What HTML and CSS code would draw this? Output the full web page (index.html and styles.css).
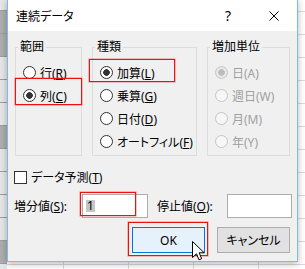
FILE: index.html
```html
<!DOCTYPE html>
<html lang="ja">
<head>
<meta charset="utf-8">
<title>連続データ</title>
<link rel="stylesheet" href="styles.css">
</head>
<body>
<div class="screen">
  <div class="sheet">
    <div class="rowheads">
      <div class="rowhead"></div>
      <div class="rowhead sel"></div>
      <div class="rowhead sel"></div>
      <div class="rowhead"></div>
      <div class="rowhead"></div>
      <div class="rowhead"></div>
      <div class="rowhead sel"></div>
      <div class="rowhead"></div>
      <div class="rowhead"></div>
      <div class="rowhead"></div>
      <div class="rowhead"></div>
      <div class="rowhead sel"></div>
      <div class="rowhead"></div>
    </div>
    <div class="cells"></div>
  </div>

  <div class="dialog">
    <div class="titlebar">
      <span class="title">連続データ</span>
      <span class="tbtn help">?</span>
      <span class="tbtn close">
        <svg width="10" height="10" viewBox="0 0 10 10"><path d="M0.5 0.5L9.5 9.5M9.5 0.5L0.5 9.5" stroke="#000" stroke-width="1" fill="none"/></svg>
      </span>
    </div>
    <div class="body">
      <div class="groups">
        <fieldset class="group g1">
          <legend>範囲</legend>
          <div class="opts">
            <label class="opt"><input class="radio" type="radio" name="range"><span>行(<u>R</u>)</span></label>
            <label class="opt"><input class="radio" type="radio" name="range" checked><span>列(<u>C</u>)</span></label>
          </div>
        </fieldset>
        <fieldset class="group g2">
          <legend>種類</legend>
          <div class="opts">
            <label class="opt"><input class="radio" type="radio" name="kind" checked><span>加算(<u>L</u>)</span></label>
            <label class="opt"><input class="radio" type="radio" name="kind"><span>乗算(<u>G</u>)</span></label>
            <label class="opt"><input class="radio" type="radio" name="kind"><span>日付(<u>D</u>)</span></label>
            <label class="opt"><input class="radio" type="radio" name="kind"><span>オートフィル(<u>F</u>)</span></label>
          </div>
        </fieldset>
        <fieldset class="group g3" disabled>
          <legend>増加単位</legend>
          <div class="opts">
            <label class="opt"><input class="radio" type="radio" name="unit" checked disabled><span>日(A)</span></label>
            <label class="opt"><input class="radio" type="radio" name="unit" disabled><span>週日(W)</span></label>
            <label class="opt"><input class="radio" type="radio" name="unit" disabled><span>月(M)</span></label>
            <label class="opt"><input class="radio" type="radio" name="unit" disabled><span>年(Y)</span></label>
          </div>
        </fieldset>
      </div>

      <label class="check"><input class="box" type="checkbox"><span>データ予測(<u>T</u>)</span></label>

      <div class="values">
        <span class="vlabel">増分値(<u>S</u>):</span>
        <div class="field"><span class="sel">1</span></div>
        <span class="vlabel second">停止値(<u>O</u>):</span>
        <div class="field"></div>
      </div>

      <div class="buttons">
        <button class="btn default" type="button">OK</button>
        <button class="btn" type="button">キャンセル</button>
      </div>
    </div>
  </div>

  <div class="mark m1"></div>
  <div class="mark m2"></div>
  <div class="mark m3"></div>
  <div class="mark m4"></div>

  <svg class="cursor" width="13" height="20" viewBox="0 0 13 20">
    <path d="M0.5 0.5L0.5 16.5L4.5 12.8L7 18.8L9.6 17.7L7.2 11.8L12.2 11.8Z" fill="#fff" stroke="#000" stroke-width="1" stroke-linejoin="miter"/>
  </svg>
</div>
</body>
</html>
```
FILE: styles.css
```css
* {
  box-sizing: border-box;
}

html,
body {
  margin: 0;
  padding: 0;
}

body {
  width: 305px;
  height: 269px;
  overflow: hidden;
  font-family: "Noto Sans", "Noto Sans CJK JP", sans-serif;
  font-size: 12px;
  font-feature-settings: "palt";
  color: #000;
}

.screen {
  position: relative;
  width: 305px;
  height: 269px;
  overflow: hidden;
  background: #fff;
}

/* Excel sheet behind the dialog */
.sheet {
  display: grid;
  grid-template-columns: 7px 1fr;
  height: 100%;
}

.rowheads {
  display: flex;
  flex-direction: column;
  margin-top: -12px;
  background: #e6e6e6;
}

.rowhead {
  flex: none;
  height: 23px;
  border-bottom: 1px solid #9e9e9e;
}

.rowhead.sel {
  background: #adadad;
}

.cells {
  background-color: #fff;
  background-image:
    linear-gradient(to bottom, transparent 22px, #dadada 22px),
    linear-gradient(to right, #dadada 1px, transparent 1px);
  background-size: 100% 23px, 65px 100%;
  background-position: 0 12px, 56px 0;
}

/* Dialog window */
.dialog {
  position: absolute;
  left: 7px;
  top: -1px;
  width: 291px;
  height: 263px;
  border: 1px solid #83b9ea;
  background: #f0f0f0;
  box-shadow: 0 2px 7px rgba(0, 0, 0, 0.28);
  display: flex;
  flex-direction: column;
}

.titlebar {
  flex: none;
  height: 31px;
  background: #fff;
  display: flex;
  align-items: center;
}

.title {
  flex: 1;
  padding-left: 8px;
}

.tbtn {
  width: 46px;
  height: 31px;
  display: flex;
  align-items: center;
  justify-content: center;
}

.help {
  font-family: "Noto Sans", sans-serif;
  font-size: 14px;
  padding-bottom: 1px;
}

.body {
  flex: 1;
  padding: 9px 7px 0 6px;
}

.groups {
  display: flex;
  gap: 10px;
  padding-left: 1px;
}

.group {
  margin: 0;
  padding: 0;
  min-width: 0;
  height: 116px;
  border: 1px solid #dcdcdc;
}

.g1 {
  width: 67px;
}

.g2 {
  width: 105px;
}

.g3 {
  width: 83px;
  color: #a0a0a0;
}

.group legend {
  margin-left: 2px;
  padding: 0 2px;
  line-height: 14px;
  color: #000;
}

.opts {
  display: flex;
  flex-direction: column;
  padding: 7px 0 0 7px;
}

.opt {
  height: 23px;
  display: flex;
  align-items: center;
  gap: 4px;
  white-space: nowrap;
}

.radio {
  appearance: none;
  flex: none;
  margin: 0;
  width: 13px;
  height: 13px;
  border: 1px solid #333;
  border-radius: 50%;
  background: #fff;
}

.radio:checked {
  background: radial-gradient(circle, #333 0 3px, #fff 3.6px);
}

.radio:disabled {
  border-color: #c4c4c4;
  background: #f7f7f7;
}

.radio:disabled:checked {
  background: radial-gradient(circle, #bcbcbc 0 3px, #e8e8e8 3.6px);
}

.check {
  display: flex;
  align-items: center;
  gap: 4px;
  height: 16px;
  margin-top: 13px;
}

.box {
  appearance: none;
  flex: none;
  margin: 0;
  width: 13px;
  height: 13px;
  border: 1px solid #333;
  background: #fff;
}

.values {
  display: grid;
  grid-template-columns: 68px 66px 79px 65px;
  align-items: center;
  height: 24px;
  margin-top: 9px;
}

.vlabel {
  white-space: nowrap;
}

.vlabel.second {
  padding-left: 9px;
}

.field {
  height: 24px;
  border: 1px solid #acacac;
  background: #fff;
  display: flex;
  align-items: center;
  padding-left: 3px;
}

.sel {
  background: #c6c6c6;
  line-height: 12px;
  padding: 0 1px;
}

.buttons {
  display: flex;
  justify-content: flex-end;
  gap: 12px;
  margin-top: 9px;
}

.btn {
  width: 73px;
  height: 26px;
  padding: 0;
  font: inherit;
  font-feature-settings: "palt";
  color: #000;
  border: 1px solid #adadad;
  background: #e1e1e1;
}

.btn.default {
  border-color: #0078d7;
  background: #e5f1fb;
}

/* red annotation frames */
.mark {
  position: absolute;
  border: 1px solid #f01010;
  box-shadow: 0 0 0 0.5px rgba(240, 16, 16, 0.5);
}

.m1 {
  left: 15px;
  top: 78px;
  width: 67px;
  height: 27px;
}

.m2 {
  left: 89px;
  top: 59px;
  width: 86px;
  height: 23px;
}

.m3 {
  left: 80px;
  top: 192px;
  width: 56px;
  height: 24px;
}

.m4 {
  left: 128px;
  top: 222px;
  width: 80px;
  height: 34px;
}

.cursor {
  position: absolute;
  left: 192px;
  top: 241px;
}
```
